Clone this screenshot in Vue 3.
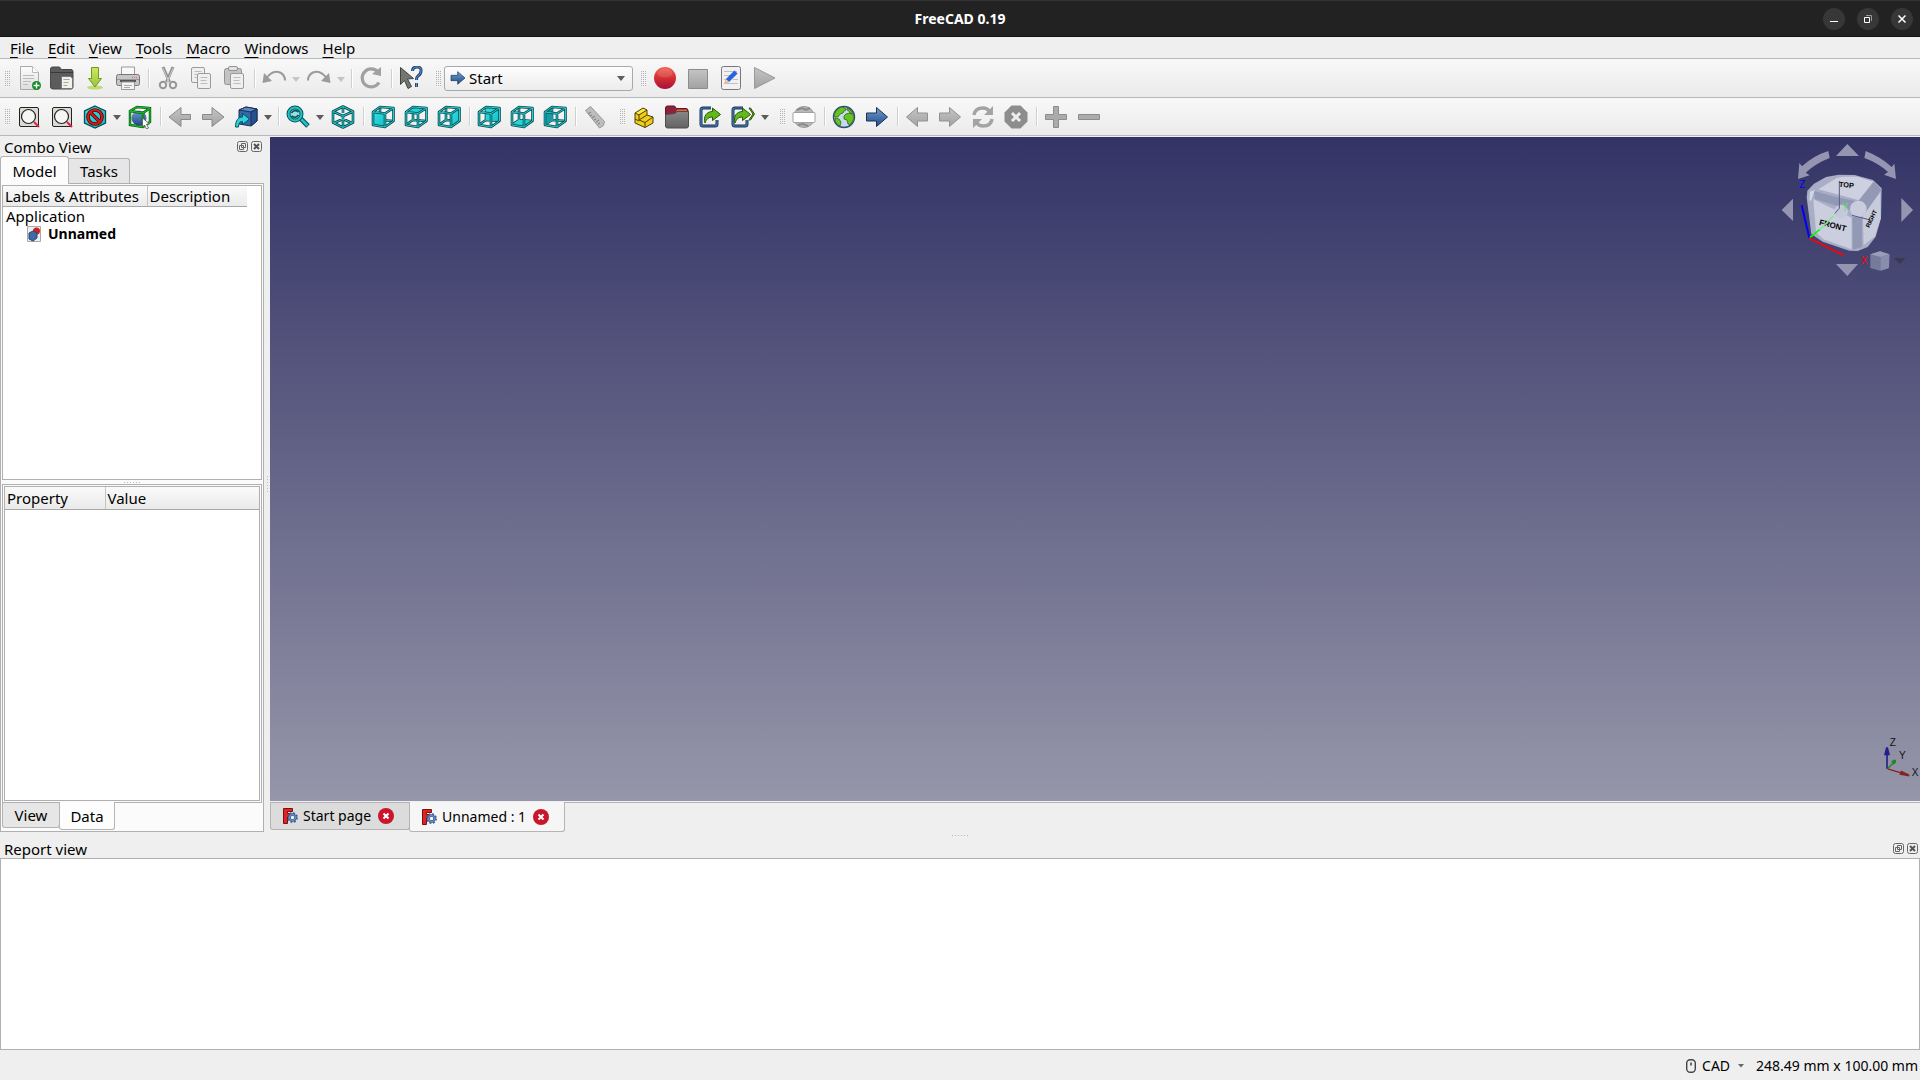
<template>
  <div class="app">
    <!-- Shared gradients for the icon set -->
    <svg class="defs" width="0" height="0" aria-hidden="true">
      <defs>
        <linearGradient id="g-teal" x1="0" y1="0" x2="1" y2="1"><stop offset="0" stop-color="#34e0e2"/><stop offset="1" stop-color="#16bfc8"/></linearGradient>
        <linearGradient id="g-blue" x1="0" y1="0" x2="0" y2="1"><stop offset="0" stop-color="#729fcf"/><stop offset="1" stop-color="#204a87"/></linearGradient>
        <linearGradient id="g-grey" x1="0" y1="0" x2="0" y2="1"><stop offset="0" stop-color="#c4c4c4"/><stop offset="1" stop-color="#a2a2a2"/></linearGradient>
        <linearGradient id="g-red" x1="0" y1="0" x2="0" y2="1"><stop offset="0" stop-color="#f0604f"/><stop offset="0.5" stop-color="#d52f33"/><stop offset="1" stop-color="#a80f38"/></linearGradient>
        <linearGradient id="g-green" x1="0" y1="0" x2="0" y2="1"><stop offset="0" stop-color="#d0e85a"/><stop offset="1" stop-color="#9cc43a"/></linearGradient>
        <linearGradient id="g-page" x1="0" y1="0" x2="0" y2="1"><stop offset="0" stop-color="#fdfdfd"/><stop offset="1" stop-color="#dedede"/></linearGradient>
        <linearGradient id="g-folder" x1="0" y1="0" x2="0" y2="1"><stop offset="0" stop-color="#878787"/><stop offset="1" stop-color="#636363"/></linearGradient>
      </defs>
    </svg>

    <header class="titlebar">
      <h1 class="window-title">FreeCAD 0.19</h1>
      <div class="window-buttons">
        <button class="window-btn" title="Minimize"><svg width="22" height="22" viewBox="0 0 22 22"><path d="M7 13.5h8" stroke="#fff" /></svg></button>
        <button class="window-btn" title="Restore"><svg width="22" height="22" viewBox="0 0 22 22" fill="none"><path d="M9 7.5h5.500v5.500" stroke="#999"/><path d="M7.500 9.500h5v5h-5z" stroke="#fff"/></svg></button>
        <button class="window-btn" title="Close"><svg width="22" height="22" viewBox="0 0 22 22"><path d="M7.500 7.500l7 7m0-7l-7 7" stroke="#fff" stroke-width="1.500"/></svg></button>
      </div>
    </header>

    <nav class="menubar">
      <button v-for="m in menus" :key="m" class="menu-btn"><u>{{ m[0] }}</u>{{ m.slice(1) }}</button>
    </nav>

    <div v-for="(bar, b) in toolbars" :key="b" class="toolbar">
      <div v-for="(group, g) in bar" :key="g" class="tool-group">
        <span class="handle"></span>
        <template v-for="(item, i) in group" :key="i">
          <span v-if="item === '|'" class="sep"></span>
          <div v-else-if="item === 'workbench'" class="workbench">
            <svg class="workbench-icon" width="16" height="16" viewBox="0 0 24 24" v-html="icons.right"></svg>
            <select v-model="workbench" class="workbench-select" aria-label="Workbench">
              <option>Start</option>
            </select>
            <svg class="workbench-arrow" width="8" height="5" viewBox="0 0 8 5"><path d="M0 0h8l-4 5z" fill="#5c5c5c"/></svg>
          </div>
          <button v-else class="tool-btn" :title="item.title">
            <svg class="tool-icon" width="24" height="24" viewBox="0 0 24 24" v-html="icons[item.icon]"></svg>
            <svg v-if="item.menu" class="tool-arrow" width="8" height="5" viewBox="0 0 8 5"><path d="M0 0h8l-4 5z" :fill="item.off ? '#c4c4c4' : '#5c5c5c'"/></svg>
          </button>
        </template>
      </div>
    </div>

    <main class="workspace">
      <aside class="combo">
        <div class="dock-title">
          <h2>Combo View</h2>
          <button v-for="d in dockButtons" :key="d" class="dock-btn" :title="d"><svg width="11" height="11" viewBox="0 0 11 11" v-html="icons[d]"></svg></button>
        </div>
        <div class="combo-tabs">
          <button v-for="t in ['Model', 'Tasks']" :key="t" class="combo-tab" :class="{ active: t === comboTab }" @click="comboTab = t">{{ t }}</button>
        </div>
        <div class="combo-pane">
          <div class="tree">
            <table class="tree-head">
              <thead><tr><th class="col-label">Labels &amp; Attributes</th><th class="col-desc">Description</th></tr></thead>
              <tbody>
                <tr><td colspan="2" class="root">Application</td></tr>
                <tr>
                  <td colspan="2" class="doc">
                    <svg width="14" height="16" viewBox="0 0 14 16"><path d="M.5.500h13v15H.500z" fill="#eee" stroke="#aaa"/><circle cx="9.500" cy="5" r="3.500" fill="#d41f1f"/><path d="M2 7l4-2 4 2v5l-4 3-4-2z" fill="#3c6ba8" stroke="#24477a"/></svg>
                    <b>Unnamed</b>
                  </td>
                </tr>
              </tbody>
            </table>
          </div>
          <div class="hsplit"><span class="grip"></span></div>
          <div class="props">
            <div class="props-inner">
              <table class="props-table">
                <thead><tr><th class="col-prop">Property</th><th>Value</th></tr></thead>
              </table>
            </div>
          </div>
          <div class="props-tabs">
            <button v-for="t in ['View', 'Data']" :key="t" class="props-tab" :class="{ active: t === propTab }" @click="propTab = t">{{ t }}</button>
          </div>
        </div>
      </aside>

      <div class="vsplit"><span class="grip vertical"></span></div>

      <section class="mdi">
        <div class="canvas">
          <svg class="navcube" width="160" height="153" viewBox="0 21 480 459">
            <g fill="#9595b2">
              <path d="M228 78l34-36 35 36zM228 402h66l-32 36zM99 206v67l-34-33zM424 204l35 36-35 36z"/>
              <path d="M205 63l4 21q-42 16-72 44l12 8-35 11 4-48 8 10q34-32 79-46zM317 63l-4 21q40 14 71 42l-12 8 36 13-5-46-8 10q-32-30-78-48z"/>
            </g>
            <path d="M236 134l48 1 55 15 26 25-2 90-16 55-24 31-30 12-25-1-80-27-34-23-14-110 2-20 20-21 36-20z" fill="#a9aec6"/>
            <path d="M248 140h43l50 15-44 56-122-33 55-34z" fill="#cdd0e0"/>
            <path d="M160 208l115 55v95l-85-30-22-21z" fill="#cbcede"/>
            <path d="M162 183l75 20 60 12-4 32-128-40z" fill="#9299b4"/>
            <path d="M277 262l29-4v93l-28 8z" fill="#9299b4"/>
            <path d="M309 258l52-77 1 84-17 54-34 27z" fill="#c7cbdc"/>
            <path d="M341 155l24 24-55 78-13-46z" fill="#9299b4"/>
            <path d="M150 185l14-5-11 33-5-3z" fill="#d3d6e5"/>
            <circle cx="243" cy="245" r="21" fill="#c4c8da"/>
            <circle cx="295" cy="237" r="25" fill="#c8ccdd"/>
            <path d="M238 153v82l-14 16m52 5l55 14" fill="none" stroke="#555b83" stroke-width="3"/>
            <text class="face" x="236" y="170" transform="rotate(6 236 170)">TOP</text>
            <text class="face big" x="176" y="284" transform="rotate(14 176 284)">FRONT</text>
            <text class="face small" x="328" y="294" transform="rotate(-65 328 294)">RIGHT</text>
            <path d="M148 323l-23-97" stroke="#0000ff" stroke-width="6"/>
            <path d="M148 325l103 51" stroke="#ff0000" stroke-width="5"/>
            <path d="M150 322l29-23" stroke="#00ff00" stroke-width="5"/>
            <path d="M179 299l41-41" stroke="#77ee85" stroke-width="4"/>
            <text class="axis" x="118" y="174" fill="#0000ff">Z</text>
            <text class="axis" x="245" y="243" fill="#61e26e">Y</text>
            <text class="axis" x="303" y="402" fill="#ff0000">X</text>
            <path d="M331 373l29-9 28 9-1 41-27 8-29-8z" fill="#777b9b"/>
            <path d="M331 373l29-9 28 9-26 8z" fill="#9a9eb7"/><path d="M362 381l26-8-1 41-25 8z" fill="#888dac"/>
            <path d="M401 384h36l-17 18z" fill="#3b3952"/>
          </svg>
          <svg class="axes" width="80" height="67" viewBox="0 40 240 200">
            <path d="M141 144v-45" stroke="#222286" stroke-width="5"/><path d="M138 79h6l6 24h-18z" fill="#222286"/>
            <path d="M143 144l40 12" stroke="#862222" stroke-width="4"/><path d="M183 149l25 12v6l-30-5z" fill="#862222"/>
            <path d="M143 143l16-16" stroke="#228622" stroke-width="4"/><path d="M154 122l6-5h8v8l-7 7z" fill="#228622"/>
            <g class="axis" fill="#111"><text x="149" y="77">Z</text><text x="177" y="115">Y</text><text x="215" y="167">X</text></g>
          </svg>
        </div>
        <div class="mdi-tabs">
          <div v-for="d in documents" :key="d" class="mdi-tab" :class="{ active: d === currentDoc }">
            <button class="mdi-label" @click="currentDoc = d"><svg width="16" height="16" viewBox="0 0 16 16" v-html="icons.freecad"></svg>{{ d }}</button>
            <button class="mdi-close" :title="`Close ${d}`"><svg width="16" height="16" viewBox="0 0 16 16"><circle cx="8" cy="8" r="8" fill="#c9162b"/><path d="M5.500 5.500l5 5m0-5l-5 5" stroke="#fff" stroke-width="2"/></svg></button>
          </div>
        </div>
      </section>
    </main>

    <div class="report-split"><span class="grip"></span></div>
    <section class="report">
      <div class="dock-title">
        <h2>Report view</h2>
        <button v-for="d in dockButtons" :key="d" class="dock-btn" :title="d"><svg width="11" height="11" viewBox="0 0 11 11" v-html="icons[d]"></svg></button>
      </div>
      <textarea class="report-text" readonly aria-label="Report view"></textarea>
    </section>

    <footer class="statusbar">
      <button class="nav-style">
        <svg width="10" height="14" viewBox="0 0 10 14" fill="none" stroke="#444"><rect x=".7" y=".7" width="8.600" height="12.600" rx="3.500" stroke-width="1.400"/><path d="M5 3.500v3" stroke-width="1.600"/></svg>
        CAD
        <svg class="nav-arrow" width="6" height="4" viewBox="0 0 6 4"><path d="M0 0h6L3 3.500z" fill="#666"/></svg>
      </button>
      <span class="dimensions">248.49 mm x 100.00 mm</span>
    </footer>
  </div>
</template>

<script setup>
import { ref } from 'vue'

const comboTab = ref('Model')
const propTab = ref('Data')
const workbench = ref('Start')
const currentDoc = ref('Unnamed : 1')

const menus = ['File', 'Edit', 'View', 'Tools', 'Macro', 'Windows', 'Help']
const documents = ['Start page', 'Unnamed : 1']
const dockButtons = ['float', 'close']

const tool = (icon, title, extra = {}) => ({ icon, title, ...extra })
const menu = { menu: true }

const toolbars = [
  [
    [
      tool('new', 'New'), tool('open', 'Open'), tool('save', 'Save'), tool('print', 'Print'), '|',
      tool('cut', 'Cut'), tool('copy', 'Copy'), tool('paste', 'Paste'), '|',
      tool('undo', 'Undo', { menu: true, off: true }), tool('redo', 'Redo', { menu: true, off: true }), '|',
      tool('refresh', 'Refresh'), '|', tool('whatsthis', "What's This?")
    ],
    ['workbench'],
    [tool('record', 'Record macro'), tool('stop', 'Stop recording'), tool('macros', 'Macros'), tool('play', 'Execute macro')]
  ],
  [
    [
      tool('fit', 'Fit all'), tool('fit', 'Fit selection'), tool('drawstyle', 'Draw style', menu), tool('bounding', 'Bounding box'), '|',
      tool('leftOff', 'Back'), tool('rightOff', 'Forward'), tool('linkNav', 'Go to linked object', menu), '|',
      tool('zoom', 'Sync view', menu), tool('iso', 'Isometric'), '|',
      tool('front', 'Front'), tool('top', 'Top'), tool('rightFace', 'Right'), '|',
      tool('rear', 'Rear'), tool('bottom', 'Bottom'), tool('leftFace', 'Left'), '|',
      tool('measure', 'Measure distance')
    ],
    [tool('part', 'Create part'), tool('group', 'Create group'), tool('link', 'Make link'), tool('links', 'Link actions', menu)],
    [
      tool('url', 'Set URL'), '|', tool('globe', 'Open website'), tool('right', 'Start page'), '|',
      tool('leftWeb', 'Previous page'), tool('rightWeb', 'Next page'), tool('reload', 'Refresh web page'), tool('stopWeb', 'Stop loading'), '|',
      tool('plus', 'Zoom in'), tool('minus', 'Zoom out')
    ]
  ]
]

// Wireframe cube with one face filled
const cube = (face, fill = 'url(#g-teal)') => {
  const back = 'M9 2v13L1.500 20M9 15l13.500 1'
  const edges = 'M2 7l7-5 13.500 1v13L14 22 2 20zM2 7l12 1.500V22M14 8.500L22.500 3'
  const lines = (d) => `<path d="${d}" fill="none" stroke="#084c50" stroke-width="2.600" stroke-linejoin="round"/><path d="${d}" fill="none" stroke="#25cdd0" stroke-width="1"/>`
  return `${lines(back)}<path d="${face}" fill="${fill}"/>${lines(edges)}`
}
const magnifier = '<rect x="2.500" y="2.500" width="19" height="19" rx="1.500" fill="#dcdad3" stroke="#222"/><circle cx="11.500" cy="11.500" r="7" fill="#f6f6f4" stroke="#222" stroke-width="1.200"/><path d="M17 17l5 5" stroke="#e0204a" stroke-width="2"/>'
const arrowRight = (fill, stroke) => `<path d="M1.500 8h10V2.500L22.500 12l-11 9.500V16h-10z" fill="${fill}" stroke="${stroke}"/>`
const arrowLeft = (fill, stroke) => `<path d="M22.500 8h-10V2.500L1.500 12l11 9.500V16h10z" fill="${fill}" stroke="${stroke}"/>`
const page = (x, y) => `<rect x="${x}" y="${y}" width="13" height="15" rx="1.500" fill="#efefef" stroke="#9b9b9b"/><path d="M${x + 3} ${y + 4}h7m-7 3h6m-6 3h7" stroke="#bdbdbd"/>`
const greenArrow = '<path d="M7 18c-2-7 2-11.500 7.500-11.500V3l8 6.500-8 6V12c-4 0-6 2-7.500 6z" fill="#63b81c" stroke="#245a08"/>'

const icons = {
  new: '<path d="M3.500.500h12l6 6v17h-18z" fill="url(#g-page)" stroke="#aaa"/><path d="M15.500.500v6h6" fill="#fff" stroke="#bbb"/><path d="M6 9.500h11M6 12.500h11M6 15.500h8M6 18.500h5" stroke="#bbb"/><circle cx="19.500" cy="19.500" r="4.500" fill="#118a25"/><path d="M16.500 19.500h6m-3-3v6" stroke="#fff" stroke-width="1.400"/>',
  open: '<path d="M.5 3q0-2 2-2h7l2 2.500H21q2 0 2 2V21q0 2-2 2H3q-2.500 0-2.500-2z" fill="#5c5c5c" stroke="#484848"/><path d="M1 6.500h22" stroke="#3a3a3a"/><path d="M11.500 10.500h9l2 2v10h-11z" fill="#f1f1ec" stroke="#777"/><path d="M13.500 13.500h6m-6 3h5m-5 3h4" stroke="#a8a8a0"/>',
  save: '<ellipse cx="12" cy="21.500" rx="8" ry="2" fill="#bfdd74"/><path d="M8.500 1.500h7v11h3L12 21 5.500 12.500h3z" fill="url(#g-green)" stroke="#6f9920"/>',
  print: '<path d="M5.500 1h13v9h-13z" fill="#f8f8f8" stroke="#999"/><rect x=".5" y="8.500" width="23" height="11" rx="2" fill="#c6c6c6" stroke="#777"/><path d="M1 13.500h22" stroke="#999"/><path d="M4 15h16" stroke="#555" stroke-width="2"/><path d="M5.500 16h13v7.500h-13z" fill="#f3f3f3" stroke="#999"/><path d="M8 19.500h8m-8 2h6" stroke="#aaa"/><path d="M16 11.500h5" stroke="#df6b61" stroke-dasharray="1 1"/>',
  cut: '<path d="M7 1l6.500 15M17 1l-6.500 15" stroke="#8d8d8d" stroke-width="3"/><path d="M7 2l6 14M17 2l-6 14" stroke="#d0d0d0"/><circle cx="7" cy="19" r="3.200" fill="none" stroke="#969696" stroke-width="2"/><circle cx="17" cy="19" r="3.200" fill="none" stroke="#969696" stroke-width="2"/>',
  copy: page(2.5, 1.5) + page(8.5, 7.5),
  paste: '<rect x="2.500" y="2.500" width="17" height="16" rx="2" fill="#c3c3c3" stroke="#929292"/><rect x="6.500" y=".5" width="9" height="4" rx="1.500" fill="#e2e2e2" stroke="#929292"/>' + page(8.5, 7.5),
  undo: '<path d="M4 13Q10 3.500 18 6.500q5 2.500 5 8" fill="none" stroke="#9b9b9b" stroke-width="2"/><path d="M.5 17L2 7l8 8z" fill="#9b9b9b"/>',
  redo: '<path d="M20 13Q14 3.500 6 6.500 1 9 1 14.500" fill="none" stroke="#9b9b9b" stroke-width="2"/><path d="M23.500 17L22 7l-8 8z" fill="#9b9b9b"/>',
  refresh: '<path d="M20 16.500A9 9 0 1 1 19 6" fill="none" stroke="#a0a0a0" stroke-width="3.200"/><path d="M22 1v9l-9-2z" fill="#a0a0a0"/>',
  whatsthis: '<path d="M1.500 1.500v17l4-4 3.500 8 3.500-2-4-7.500 6-.5z" fill="#737772" stroke="#41443f"/><path d="M13.500 5q0-4 4.500-4t4 4q0 3-3 5-1.500 1-1.500 4m0 3v4" fill="none" stroke="#24477a" stroke-width="3"/><path d="M13.500 5q0-4 4.500-4t4 4q0 3-3 5-1.500 1-1.500 4m0 3v4" fill="none" stroke="#5d8cc5"/>',
  record: '<circle cx="12" cy="12" r="11" fill="url(#g-red)"/><ellipse cx="12" cy="7" rx="7.500" ry="4.500" fill="#fff" opacity=".12"/>',
  stop: '<path d="M2.500 3.500h19v19h-19z" fill="url(#g-grey)" stroke="#8c8c8c"/>',
  macros: '<rect x="2.500" y=".5" width="19" height="23" rx="2" fill="#f1f1f1" stroke="#777"/><path d="M5 5.500h13M5 9.500h9M5 13.500h5m4 0h5M5 17.500h14" stroke="#c0c0c0"/><path d="M8.500 14.500L17 6" stroke="#2c62df" stroke-width="4.500"/><path d="M5 18l1.500-4.500L10 17z" fill="#f0b789"/>',
  play: '<path d="M2.500 1.500v21L23 12z" fill="url(#g-grey)" stroke="#999"/>',
  fit: magnifier,
  drawstyle: '<path d="M12 1l10.500 5v12L12 23 1.500 18V6z" fill="url(#g-teal)" stroke="#084c50" stroke-width="1.300"/><circle cx="12" cy="12" r="7" fill="none" stroke="#4b0000" stroke-width="3.600"/><path d="M7 7l10 10" stroke="#4b0000" stroke-width="3.600"/><circle cx="12" cy="12" r="7" fill="none" stroke="#d8191c" stroke-width="2"/><path d="M7 7l10 10" stroke="#d8191c" stroke-width="2"/>',
  bounding: '<circle cx="11" cy="13" r="7.500" fill="url(#g-blue)"/><path d="M2 6l7-4 13 1v14l-7 5-13-2zM2 6l13 2v14m0-14l7-5" fill="none" stroke="#06400d" stroke-width="2.400"/><path d="M2 6l7-4 13 1v14l-7 5-13-2zM2 6l13 2v14m0-14l7-5" fill="none" stroke="#14bb29" stroke-width="1.300"/><path d="M14.500 13v9l2-2 2 4 2-1-2-4h3z" fill="#fff" stroke="#555" stroke-width=".8"/>',
  leftOff: '<path d="M22.500 9.500H13V2.500L1 12l12 9.500v-7h9.500z" fill="url(#g-grey)" stroke="#8a8a8a"/>',
  rightOff: '<path d="M1.500 9.500H11V2.500L23 12l-12 9.500v-7H1.500z" fill="url(#g-grey)" stroke="#8a8a8a"/>',
  linkNav: '<path d="M5 5l7-3 11 2v12l-6 5L5 19z" fill="#3566a5" stroke="#16305b"/><path d="M5 5l12 2 6-3-11-2z" fill="#5c8ac0" stroke="#16305b"/><path d="M17 7v14l6-5V4z" fill="#24528f" stroke="#16305b"/><path d="M1.500 22c0-7 3-10 7-10V8.500l7 5.500-7 5.500v-3c-3 0-4 2-4 5.500z" fill="#2bd3dc" stroke="#07535a"/>',
  zoom: '<path d="M14 13l8 8" stroke="#07565b" stroke-width="5"/><path d="M14 13l7.500 7.500" stroke="#22c3c9" stroke-width="2.500"/><circle cx="9" cy="9" r="6.500" fill="#9adfe1" stroke="#07565b" stroke-width="4"/><circle cx="9" cy="9" r="6.500" fill="none" stroke="#22c3c9" stroke-width="2"/><path d="M5.500 8q3-4 7-1M12.500 10q-3 4-7 1" fill="none" stroke="#07565b" stroke-width="1.600"/>',
  iso: ['#084c50" stroke-width="2.600', '#25cdd0" stroke-width="1'].map((s) => `<path d="M12 1.500l10 5v11l-10 5-10-5v-11zM2 6.500l10 4.500 10-4.500M12 11v11.500M12 1.500V8m0 6l-9 4m9-4l9 4" fill="none" stroke="${s}" stroke-linejoin="round"/>`).join(''),
  front: cube('M2 7l12 1.500V22L2 20z'),
  top: cube('M2 7l7-5 13.500 1L14 8.500z'),
  rightFace: cube('M14 8.500L22.500 3v13L14 22z'),
  rear: cube('M9 2l13.500 1v13L9 15z'),
  bottom: cube('M2 20l7-5 13.500 1L14 22z'),
  leftFace: cube('M2 7l7-5v13l-7 5z', '#139da5'),
  measure: '<path d="M2.500 5.500l5-4 14 15-1 4-4 2.500z" fill="#bdbdbd" stroke="#999"/><path d="M5 9l3-2m-1 4l2-1m0 3l3-2m-1 4l2-1m0 3l3-2m-1 4l2-1" stroke="#777"/>',
  part: '<path d="M3 8l8-5 4 2v5l6 2v6l-8 4.500L3 18z" fill="#f0cc19" stroke="#4c4000" stroke-linejoin="round"/><path d="M3 8l4 2 8-5M7 10v5l6 2.500v5M7 15l8-5m-2 7.500l8-5.500M3 14l4 2" fill="none" stroke="#4c4000"/><path d="M4.500 8L11 4l2.500 1L7 9z" fill="#fbe94f"/>',
  group: '<path d="M.5 3q0-2 2-2h7l2 2.500H21q2 0 2 2V10H.500z" fill="#8d2238" stroke="#641224"/><path d="M12 4.500h10v2H11z" fill="#e76439"/><path d="M.5 9.500L10 8.500l2-2h11.500V21q0 2-2 2h-19q-2 0-2-2z" fill="url(#g-folder)" stroke="#4d4d4d"/>',
  link: '<path d="M13 3H5Q3 3 3 5v14q0 2 2 2h12q2 0 2-2v-4" fill="none" stroke="#173258" stroke-width="3"/><path d="M13 3H5Q3 3 3 5v14q0 2 2 2h12q2 0 2-2v-4" fill="none" stroke="#4c7db9" stroke-width="1.200"/>' + greenArrow,
  links: '<path d="M12 3H4Q2 3 2 5v14q0 2 2 2h10q2 0 2-2v-4" fill="none" stroke="#173258" stroke-width="3"/><path d="M12 3H4Q2 3 2 5v14q0 2 2 2h10q2 0 2-2v-4" fill="none" stroke="#4c7db9" stroke-width="1.200"/><g transform="translate(-3 0)">' + greenArrow + '</g><path d="M18 3l4 6-4 6h1.500l4-6-4-6z" fill="#63b81c" stroke="#245a08"/>',
  url: '<circle cx="12" cy="12" r="10.500" fill="#b9b9b9" stroke="#989898"/><path d="M5 5l5-2 4 2 4-2M6 20l5-1 5 2" fill="none" stroke="#8c8c8c" stroke-width="2"/><rect x="1" y="7.500" width="22" height="10" rx="1" fill="#fff" stroke="#a2a2a2"/>',
  globe: '<circle cx="12" cy="12" r="10.500" fill="#c5d9ef" stroke="#2d4c76" stroke-width="1.400"/><path d="M9 2l4 1 1 2-2 1-1 2-3 1-2 3H3l-1-2q1-5 7-8zM3 13l4 1 2 3-1 4q-5-2-5-8zM15 3q5 2 6 6l-3-1-1-2-2-1zM14 9l4-1 4 3q0 4-2 6l-2 3-2-1-1-4-3-1v-3z" fill="#67c323" stroke="#2e6c12" stroke-width=".8"/>',
  right: arrowRight('url(#g-blue)', '#16305b'),
  leftWeb: arrowLeft('url(#g-grey)', '#919191'),
  rightWeb: arrowRight('url(#g-grey)', '#919191'),
  reload: '<path d="M3 10q1-7 9-7 4 0 6 3M21 14q-1 7-9 7-4 0-6-3" fill="none" stroke="#a3a3a3" stroke-width="3.500"/><path d="M22 1v9h-9zM2 23v-9h9z" fill="#a3a3a3"/>',
  stopWeb: '<path d="M7.500.500h9l7 7v9l-7 7h-9l-7-7v-9z" fill="#8d8d8d"/><path d="M8 8l8 8m0-8l-8 8" stroke="#eee" stroke-width="3"/>',
  plus: '<path d="M9.500 1.500h5v8h8v5h-8v8h-5v-8h-8v-5h8z" fill="#ababab" stroke="#8c8c8c"/>',
  minus: '<path d="M1.500 9.500h21v5h-21z" fill="#ababab" stroke="#8c8c8c"/>',
  freecad: '<path d="M1.500.500h9v3h-5v2h3v3h-3v7h-4z" fill="#e02323" stroke="#7b1010"/><circle cx="10.500" cy="9.500" r="3" fill="none" stroke="#3a5f98" stroke-width="2.600"/><circle cx="10.500" cy="9.500" r="4.600" fill="none" stroke="#3a5f98" stroke-width="1.600" stroke-dasharray="2 1.610"/><circle cx="10.500" cy="9.500" r="1.500" fill="#f4f4f4"/><circle cx="10.500" cy="9.500" r="3" fill="none" stroke="#7aa0d4"/>',
  float: '<rect x=".5" y=".5" width="10" height="10" rx="2" fill="none" stroke="#666"/><path d="M4.500 2.500h4v4h-4zM2.500 4.500h4v4h-4z" fill="none" stroke="#666"/>',
  close: '<rect x=".5" y=".5" width="10" height="10" rx="2" fill="none" stroke="#666"/><path d="M3 3l5 5m0-5L3 8" stroke="#555" stroke-width="2"/>'
}
</script>

<style>
body { background: #efefef; }
</style>

<style scoped>
.app { min-height: 100vh; display: flex; flex-direction: column; background: #efefef; color: #000; font: 15px/18px "Noto Sans", "Open Sans", sans-serif; }
button { font: inherit; color: inherit; background: none; border: none; padding: 0; margin: 0; }
h1, h2 { margin: 0; font: inherit; }
svg { display: block; flex-shrink: 0; }
.defs { position: absolute; }

.titlebar { height: 37px; box-sizing: border-box; display: grid; grid-template-columns: 1fr auto 1fr; align-items: center; background: #222; border-top: 1px solid #333; border-bottom: 1px solid #141414; }
.window-title { grid-column: 2; color: #fff; font-size: 14px; font-weight: 700; }
.window-buttons { display: flex; gap: 12px; justify-content: flex-end; padding-right: 7px; }
.window-btn { width: 22px; height: 22px; border-radius: 50%; background: #373737; }

.menubar { display: flex; height: 21px; padding-left: 3px; }
.menu-btn { padding: 0 7px; }
.menu-btn u { text-underline-offset: 3px; }

.toolbar { display: flex; gap: 3px; height: 38px; border-top: 1px solid #b8b8b8; background: linear-gradient(#f8f8f8, #ebebeb); }
.toolbar + .toolbar { height: 37px; }
.tool-group { display: flex; align-items: center; }
.handle { width: 5px; height: 17px; margin: 0 3px 0 5px; background: repeating-linear-gradient(#f2f2f2 0 1px, transparent 1px 2px), repeating-linear-gradient(90deg, #b4b4b4 0 1px, transparent 1px 2px); }
.sep { width: 1px; height: 19px; margin: 0 2px 0 3px; background: #cfcfcf; border-right: 1px solid #fff; }
.tool-btn { display: flex; align-items: center; height: 33px; padding: 0 5px 0 4px; }
.tool-arrow { margin: 2px 0 0 6px; }
.tool-btn:has(.tool-arrow) { padding-right: 3px; }
.workbench { position: relative; width: 189px; height: 25px; }
.workbench-select { appearance: none; width: 100%; height: 25px; padding: 0 20px 0 24px; font: inherit; color: #000; border: 1px solid #a9a9a9; border-radius: 3px; background: linear-gradient(#fdfdfd, #ececec); }
.workbench-icon { position: absolute; left: 6px; top: 4px; }
.workbench-arrow { position: absolute; right: 8px; top: 10px; }

.workspace { flex: 1; display: flex; border-top: 1px solid #b8b8b8; padding-top: 1px; }
.combo { width: 264px; display: flex; flex-direction: column; }
.dock-title { display: flex; align-items: center; gap: 3px; height: 19px; padding: 0 2px 0 4px; }
.dock-title h2 { flex: 1; }
.combo-tabs { display: flex; align-items: flex-end; height: 27px; }
.combo-tab { height: 25px; width: 61px; border: 1px solid #b4b4b4; border-bottom: none; border-left: none; border-radius: 0 3px 0 0; background: #e6e6e6; }
.combo-tab.active { height: 28px; width: 69px; margin-bottom: -1px; border-left: 1px solid #b4b4b4; border-radius: 3px 3px 0 0; background: #fcfcfc; z-index: 1; }
.combo-pane { flex: 1; display: flex; flex-direction: column; border: 1px solid #b0b0b0; background: #fbfbfb; padding: 1px; }
.tree { flex: 296 1 0; box-sizing: border-box; border: 1px solid #b0b0b0; background: #fff; overflow: hidden; }
table { border-collapse: collapse; }
th { height: 20px; box-sizing: border-box; padding: 0 2px; text-align: left; font-weight: 400; line-height: 18px; background: linear-gradient(#fafafa, #eaeaea); border-bottom: 1px solid #a9a9a9; white-space: nowrap; }
td { padding: 0; height: 18px; }
.tree-head { table-layout: fixed; width: 244px; }
.col-label { width: 144px; border-right: 1px solid #c4c4c4; }
.root { padding-left: 3px; }
.doc { padding-left: 24px; font-size: 14px; }
.doc svg { float: left; margin: 1px 7px 0 0; }
.hsplit { height: 4px; display: grid; place-items: center; }
.grip { width: 17px; height: 1px; background: repeating-linear-gradient(90deg, #b8b8b8 0 1px, transparent 1px 3px); }
.grip.vertical { width: 1px; height: 17px; background: repeating-linear-gradient(#b8b8b8 0 1px, transparent 1px 3px); }
.props { flex: 318 1 0; display: flex; box-sizing: border-box; border: 1px solid #b0b0b0; padding: 1px; }
.props-inner { flex: 1; border: 1px solid #b0b0b0; background: #fff; }
.props-table { width: 100%; table-layout: fixed; }
.props-table th { height: 22px; line-height: 20px; }
.col-prop { width: 100px; border-right: 1px solid #c4c4c4; }
.props-tabs { display: flex; align-items: flex-start; height: 27px; }
.props-tab { width: 58px; height: 25px; border: 1px solid #b4b4b4; border-top: none; border-radius: 0 0 3px 3px; background: #e6e6e6; }
.props-tab.active { width: 56px; height: 28px; margin: -1px 0 0 -1px; background: #fdfdfd; }

.vsplit { width: 6px; display: grid; place-items: center; }
.mdi { flex: 1; min-width: 0; display: flex; flex-direction: column; }
.canvas { position: relative; flex: 1; background: linear-gradient(#333366, #9696aa); }
.navcube { position: absolute; top: 0; right: 0; }
.axes { position: absolute; right: 0; bottom: 0; }
.face { font: 700 22px "Liberation Sans", sans-serif; fill: #000; }
.face.big { font-size: 24px; }
.face.small { font-size: 18px; }
.axis { font: 30px "Liberation Sans", sans-serif; }
.mdi-tabs { display: flex; align-items: flex-start; height: 29px; margin-top: 1px; border-top: 1px solid #b4b4b4; font-size: 14px; }
.mdi-tab { display: flex; align-items: center; gap: 7px; height: 26px; padding: 0 15px 0 11px; border: 1px solid #b4b4b4; border-top: none; border-radius: 0 0 3px 3px; background: #dcdcdc; }
.mdi-tab.active { height: 29px; margin: -1px 0 0 -1px; background: #f6f6f6; }
.mdi-label { display: flex; align-items: center; gap: 5px; white-space: nowrap; }

.report-split { height: 7px; display: grid; place-items: center; }
.report-text { display: block; box-sizing: border-box; width: 100%; height: 192px; margin: 0; border: 1px solid #b0b0b0; background: #fff; resize: none; outline: none; }
.statusbar { display: flex; align-items: center; justify-content: flex-end; gap: 12px; height: 30px; padding: 2px 2px 0 0; box-sizing: border-box; font-size: 14px; }
.nav-style { display: flex; align-items: center; gap: 6px; }
.nav-arrow { margin-left: 2px; }
.dimensions { white-space: nowrap; }
</style>
